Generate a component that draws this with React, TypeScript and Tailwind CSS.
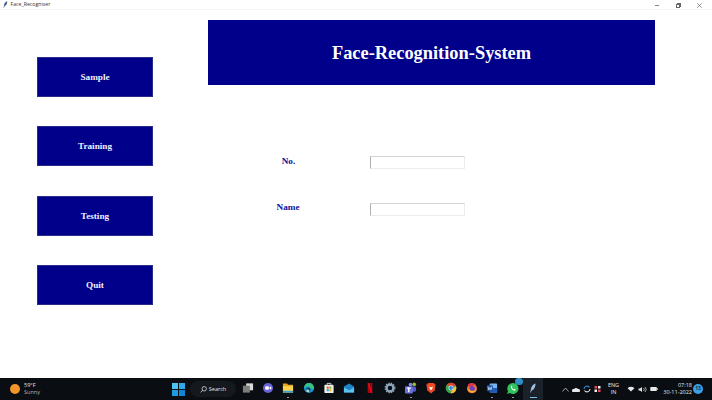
import React from 'react';

const serif = "font-['Liberation_Serif','Times_New_Roman',serif]";
const sans = "font-['Open_Sans','Noto_Sans',sans-serif]";

const menu = ['Sample', 'Training', 'Testing', 'Quit'];

const Feather = ({ color = '#3f5f8a', size = 9 }: { color?: string; size?: number }) => (
  <svg width={size} height={size} viewBox="0 0 10 10">
    <path d="M7.5 0.5 C5 1 3 3.5 2.8 7 L2.2 9.5 L3 9.5 L3.6 7.4 C6 7 7.6 4 7.5 0.5Z" fill={color} />
  </svg>
);

const apps: { icon: React.ReactNode; open?: boolean }[] = [
  // task view
  { icon: (
    <svg width="12" height="12" viewBox="0 0 13 13">
      <rect x="4.5" y="1.5" width="7.5" height="7.5" fill="#d8d8d8" />
      <rect x="1" y="4" width="7.5" height="7.5" fill="#7d7d7d" />
    </svg>
  ) },
  // chat
  { icon: (
    <svg width="12" height="12" viewBox="0 0 13 13">
      <circle cx="6.5" cy="6.5" r="5.5" fill="#6a63d8" />
      <rect x="3.5" y="4.7" width="4" height="3.6" rx="1" fill="#fff" />
      <path d="M8 6 L10 4.8 V8.2 L8 7Z" fill="#fff" />
    </svg>
  ) },
  // files
  { open: true, icon: (
    <svg width="12" height="12" viewBox="0 0 13 13">
      <path d="M1 1.5 H5.5 L6.5 3 H12 V5.5 H1Z" fill="#e5a81f" />
      <rect x="1" y="4.5" width="11" height="7" fill="#fcd34d" />
      <rect x="1" y="9.5" width="11" height="2" fill="#38a0d8" />
    </svg>
  ) },
  // edge
  { icon: (
    <svg width="12" height="12" viewBox="0 0 13 13">
      <circle cx="6.5" cy="6.5" r="5.5" fill="#1596c9" />
      <path d="M1 6.5 A5.5 5.5 0 0 1 12 6.5 C12 8 9.5 8.2 8.5 7.4 C8.8 5 4 3.5 1 6.5Z" fill="#37c481" />
      <circle cx="5.8" cy="8.2" r="2.2" fill="#0b3f74" />
      <circle cx="5.2" cy="9.6" r="1.6" fill="#c8d4dc" />
    </svg>
  ) },
  // store
  { icon: (
    <svg width="12" height="12" viewBox="0 0 13 13">
      <path d="M4.5 3 V1.5 H8.5 V3" stroke="#d8d8d8" fill="none" />
      <rect x="1.5" y="3" width="10" height="9" rx="1" fill="#f1efe6" />
      <rect x="4" y="5" width="2.2" height="2.2" fill="#e5532d" />
      <rect x="6.8" y="5" width="2.2" height="2.2" fill="#79b62b" />
      <rect x="4" y="7.8" width="2.2" height="2.2" fill="#18a0e0" />
      <rect x="6.8" y="7.8" width="2.2" height="2.2" fill="#f7b90f" />
    </svg>
  ) },
  // mail
  { icon: (
    <svg width="12" height="12" viewBox="0 0 13 13">
      <path d="M1 5 L6.5 1.5 L12 5 V11.5 H1Z" fill="#1c86c8" />
      <path d="M1 6 L6.5 9 L12 6 V11.5 H1Z" fill="#5cc2ee" />
    </svg>
  ) },
  // netflix
  { icon: (
    <svg width="12" height="12" viewBox="0 0 13 13">
      <rect x="4" y="1" width="2" height="11" fill="#b20710" />
      <rect x="7" y="1" width="2" height="11" fill="#b20710" />
      <path d="M4 1 H6 L9 12 H7Z" fill="#e50914" />
    </svg>
  ) },
  // settings
  { icon: (
    <svg width="12" height="12" viewBox="0 0 13 13">
      <circle cx="6.5" cy="6.5" r="3.7" fill="none" stroke="#8fa8bd" strokeWidth="2.4" />
      <circle cx="6.5" cy="6.5" r="5.3" fill="none" stroke="#8fa8bd" strokeWidth="1.2" strokeDasharray="1.6 1.2" />
    </svg>
  ) },
  // teams
  { open: true, icon: (
    <svg width="13" height="12" viewBox="0 0 14 13">
      <circle cx="11" cy="2.5" r="2" fill="#9bbb3a" />
      <circle cx="7" cy="2.8" r="2" fill="#7b83eb" />
      <rect x="8" y="5" width="5" height="5.5" rx="1.5" fill="#5059c9" />
      <rect x="1" y="4.5" width="8.5" height="8" rx="1" fill="#6a70d8" />
      <rect x="4.4" y="6" width="1.5" height="5" fill="#fff" />
      <rect x="3" y="6" width="4.4" height="1.3" fill="#fff" />
    </svg>
  ) },
  // brave
  { icon: (
    <svg width="12" height="12" viewBox="0 0 13 13">
      <path d="M3.5 1 H9.5 L11.5 3 L10.5 9 L6.5 12.5 L2.5 9 L1.5 3Z" fill="#ef4a23" />
      <path d="M4.5 5 L6.5 6 L8.5 5 L7.5 8.5 H5.5Z" fill="#fff" />
    </svg>
  ) },
  // chrome
  { icon: (
    <svg width="12" height="12" viewBox="0 0 13 13">
      <circle cx="6.5" cy="6.5" r="5.8" fill="#3aa757" />
      <path d="M1.4 4 A5.8 5.8 0 0 1 11.8 4.2 H6.5Z" fill="#e0442e" />
      <path d="M11.8 4.2 A5.8 5.8 0 0 1 6 12.3 L8.5 7.5Z" fill="#fbc02d" />
      <circle cx="6.5" cy="6.5" r="2.7" fill="#fff" />
      <circle cx="6.5" cy="6.5" r="2.1" fill="#3b82e0" />
    </svg>
  ) },
  // firefox
  { icon: (
    <svg width="12" height="12" viewBox="0 0 13 13">
      <circle cx="6.5" cy="7" r="5.3" fill="#f5762a" />
      <path d="M2 3 C4 0.5 9 0.5 11 3.5 C9 2.8 8 3.5 7.5 4.5 L3.5 6Z" fill="#e0314b" />
      <circle cx="6.8" cy="7.2" r="2.8" fill="#6d3fc4" />
      <path d="M1.5 7 C2.5 12 9.5 13 11.5 8 C9.5 10 5 10.5 1.5 7Z" fill="#fbb326" />
    </svg>
  ) },
  // word
  { open: true, icon: (
    <svg width="12" height="12" viewBox="0 0 13 13">
      <rect x="4" y="1.5" width="8" height="10" rx="0.8" fill="#7cb4f0" />
      <rect x="4" y="6.5" width="8" height="5" fill="#1d5cb8" />
      <rect x="1" y="3.5" width="6.5" height="6.5" rx="0.8" fill="#1e56a8" />
      <path d="M2.2 5 L3 8.5 L4.2 6 L5.4 8.5 L6.2 5" stroke="#fff" strokeWidth="0.7" fill="none" />
    </svg>
  ) },
  // whatsapp
  { open: true, icon: (
    <span className="relative flex">
      <svg width="14" height="14" viewBox="0 0 14 14">
        <path d="M7 2 A5.5 5.5 0 1 1 3.8 12 L1 13 L2 10.2 A5.5 5.5 0 0 1 7 2Z" fill="#30c25c" />
        <path d="M5 5 C4.5 7.5 7 10 9.5 9.5 L9.5 8.3 L8.2 7.8 L7.6 8.4 C6.8 8 6.2 7.3 5.9 6.6 L6.4 6 L6 4.8Z" fill="#fff" />
      </svg>
      <span className="absolute -right-[3px] -top-[3px] h-[7px] w-[8px] rounded-full bg-[#2f8fc4]" />
    </span>
  ) },
];

const App: React.FC = () => {
  return (
    <div className="flex h-[400px] w-[712px] flex-col overflow-hidden bg-white">
      {/* title bar */}
      <div className="flex h-[10px] items-center justify-between border-b border-[#f5f5f5] pl-[2px]">
        <div className="flex items-center gap-[1.5px]">
          <Feather size={7} />
          <span className={`${sans} text-[5.2px] leading-none text-[#333]`}>Face_Recogniser</span>
        </div>
        <div className="flex items-center gap-[17px] pr-[10px] pt-[2px]">
          <div className="h-px w-[4px] bg-[#888]" />
          <div className="relative h-[4px] w-[4px] border border-[#666]">
            <div className="absolute -right-[2px] -top-[2px] h-[4px] w-[4px] border-r border-t border-[#666]" />
          </div>
          <svg width="5" height="5" viewBox="0 0 5 5">
            <path d="M0.3 0.3 L4.7 4.7 M4.7 0.3 L0.3 4.7" stroke="#666" strokeWidth="0.7" />
          </svg>
        </div>
      </div>

      {/* tkinter window */}
      <div className={`${serif} flex flex-1 font-bold`}>
        <div className="flex w-[208px] flex-col gap-[29.33px] pl-[37px] pt-[47px]">
          {menu.map(label => (
            <div key={label} className="flex h-[40px] w-[116px] items-center justify-center border border-[#2a2a8a] bg-[#00008b] pt-[2px] text-[9.2px] text-[#f0f0ff]">
              {label}
            </div>
          ))}
        </div>
        <div className="flex flex-1 flex-col pt-[10px]">
          <div className="flex h-[65px] w-[447px] items-center justify-center bg-[#00008b] pt-[2px] text-[18.4px] text-white">
            Face-Recognition-System
          </div>
          <div className="mt-[71px] flex flex-col gap-[34px] text-[9.2px] text-[#10109a]">
            <div className="flex h-[13px] items-center">
              <span className="w-[161px] pb-[1px] text-center">No.</span>
              <div className="ml-[1px] h-[13px] w-[95px] border border-[#ececec] border-l-[#b0b0b0] border-t-[#d4d4d4]" />
            </div>
            <div className="flex h-[13px] items-center">
              <span className="w-[160px] pb-[3px] text-center">Name</span>
              <div className="ml-[2px] h-[13px] w-[95px] border border-[#ececec] border-l-[#b0b0b0] border-t-[#d4d4d4]" />
            </div>
          </div>
        </div>
      </div>

      {/* windows taskbar */}
      <div className={`${sans} flex h-[22px] items-center bg-[#0a0d12] text-[#e6e6e6]`}>
        <div className="flex w-[171.5px] shrink-0 items-center gap-[4px] pl-[10px]">
          <div className="h-[10px] w-[10px] rounded-full bg-[#f0962a]" />
          <div className="flex flex-col text-[5.5px] leading-[7px]">
            <span>59°F</span>
            <span className="text-[#b5b5b5]">Sunny</span>
          </div>
        </div>
        <div className="grid h-[13px] w-[13px] shrink-0 grid-cols-2 gap-px">
          <div className="bg-[#4cc2f1]" />
          <div className="bg-[#2fa8e8]" />
          <div className="bg-[#1d9be3]" />
          <div className="bg-[#1385d8]" />
        </div>
        <div className="ml-[5.5px] flex h-[16px] w-[46px] shrink-0 items-center justify-center gap-[2px] rounded-full bg-[#15181d]">
          <svg width="7" height="7" viewBox="0 0 7 7">
            <circle cx="4.2" cy="2.8" r="2.2" fill="none" stroke="#ddd" strokeWidth="0.8" />
            <path d="M2.6 4.4 L0.6 6.4" stroke="#ddd" strokeWidth="0.8" />
          </svg>
          <span className="text-[5.5px]">Search</span>
        </div>
        <div className="ml-[5px] flex shrink-0 items-center gap-[7.4px]">
          {apps.map((app, i) => (
            <span key={i} className="relative flex h-[14px] w-[13px] items-center justify-center pb-[2px]">
              {app.icon}
              {app.open && <span className="absolute -bottom-[2px] h-px w-[2px] bg-[#999]" />}
            </span>
          ))}
          <span className="relative -ml-[3px] flex h-[22px] w-[20px] items-center justify-center bg-[#1b2129] pb-[2px]">
            <Feather color="#9cc0e0" size={10} />
            <span className="absolute bottom-[2px] h-px w-[7px] bg-[#6fc3ee]" />
          </span>
        </div>

        {/* tray */}
        <div className="ml-auto flex shrink-0 items-center pr-[9px]">
          <div className="flex items-center gap-[3px]">
            <svg width="7" height="5" viewBox="0 0 7 5">
              <path d="M0.5 4.5 L3.5 1 L6.5 4.5" stroke="#ddd" strokeWidth="0.7" fill="none" />
            </svg>
            <svg width="8" height="5" viewBox="0 0 8 5">
              <path d="M1 5 A1.5 1.5 0 0 1 2 2 A2.4 2.4 0 0 1 6 2 A1.5 1.5 0 0 1 7 5Z" fill="#e8e8e8" />
            </svg>
            <svg width="8" height="8" viewBox="0 0 8 8">
              <path d="M1 4 A3 3 0 0 1 6.5 2.5" stroke="#3a8de0" strokeWidth="1.1" fill="none" />
              <path d="M7 4 A3 3 0 0 1 1.5 5.5" stroke="#ddd" strokeWidth="1.1" fill="none" />
            </svg>
            <svg width="7" height="8" viewBox="0 0 7 8">
              <rect x="0.5" y="1" width="2.5" height="2.5" fill="#e8455a" />
              <rect x="4" y="1" width="2.5" height="2.5" fill="#f0f0f0" />
              <rect x="0.5" y="4.5" width="2.5" height="2.5" fill="#f0f0f0" />
              <rect x="4" y="4.5" width="2.5" height="2.5" fill="#e8455a" />
            </svg>
          </div>
          <div className="ml-[6px] flex w-[14px] flex-col items-center text-[5.5px] leading-[7px]">
            <span>ENG</span>
            <span>IN</span>
          </div>
          <div className="ml-[6.5px] flex items-center gap-[3px]">
            <svg width="8" height="6" viewBox="0 0 9 7">
              <path d="M0.5 2.5 A5.5 5.5 0 0 1 8.5 2.5 L4.5 6.5Z" fill="#e4e4e4" />
            </svg>
            <svg width="9" height="7" viewBox="0 0 9 7">
              <path d="M0.5 2.5 H2 L4 1 V6 L2 4.5 H0.5Z" fill="#e4e4e4" />
              <path d="M5.5 2 A2 2 0 0 1 5.5 5 M7 1 A3.5 3.5 0 0 1 7 6" stroke="#e4e4e4" strokeWidth="0.7" fill="none" />
            </svg>
            <svg width="8" height="6" viewBox="0 0 9 6">
              <rect x="0.3" y="0.8" width="7.4" height="4.4" rx="0.8" fill="#e8e8e8" />
              <rect x="8" y="2" width="0.8" height="2" fill="#e8e8e8" />
            </svg>
          </div>
          <div className="ml-[7px] flex w-[27px] flex-col items-end text-[5.5px] leading-[7px]">
            <span>07:18</span>
            <span className="whitespace-nowrap">30-11-2022</span>
          </div>
          <div className="ml-[1px] flex h-[10px] w-[10px] items-center justify-center rounded-full bg-[#3aa0e8] text-[5px] font-bold text-[#0b2a44]">
            13
          </div>
        </div>
      </div>
    </div>
  );
};

export default App;
